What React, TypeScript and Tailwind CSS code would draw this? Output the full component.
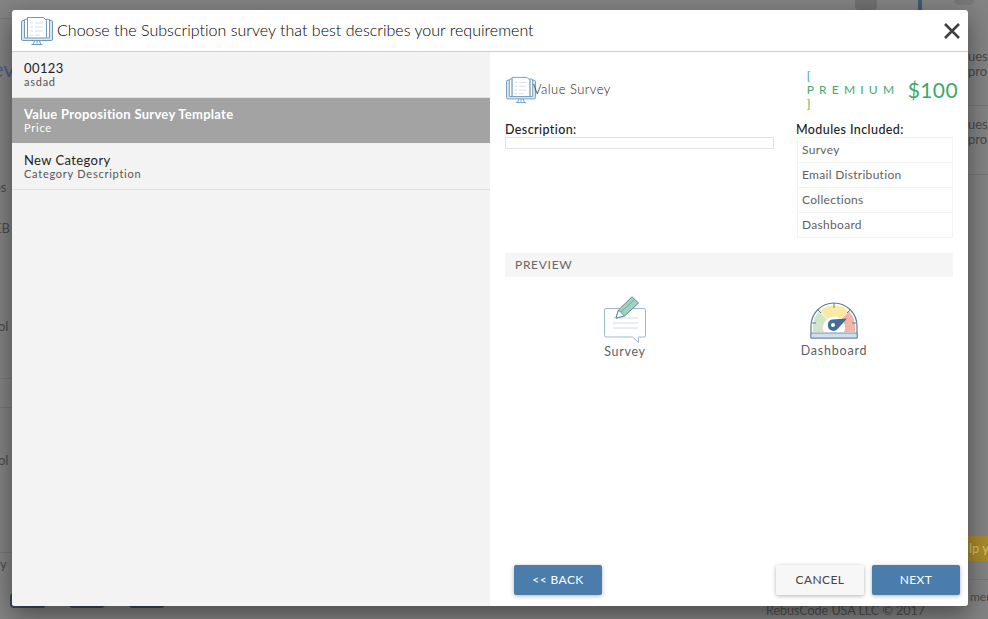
const font = { fontFamily: 'Lato, sans-serif' }

function SurveyBook({ className }: { className?: string }) {
  return (
    <svg viewBox="0 0 32 30" className={className} fill="none" stroke="#6f9abd" strokeWidth="1">
      <rect x="0.5" y="4.5" width="31" height="20" rx="1.5" fill="#dbe8f3" />
      <path d="M3.5 22V3.5l3-.5v19zM28.5 22V3.5l-3-.5v19z" fill="#fff" />
      <path d="M6.5 1.5h16l3 3v17.5h-19z" fill="#fff" />
      <path d="M9 7h3M14 7h8M9 11h3M14 11h8M9 15h3M14 15h8M9 19h3M14 19h5" stroke="#d5e0e9" />
      <path d="M16 24.5v3M13.5 24.5l-1 3.5M18.500 24.5l1 3.5M10.5 28.5h11" />
    </svg>
  )
}

function SurveyIcon() {
  return (
    <svg viewBox="0 0 42 48" className="h-12 w-[42px]" fill="none">
      <path d="M2 12.500h38a1.500 1.500 0 0 1 1.500 1.500v25.500a1.500 1.500 0 0 1-1.500 1.500h-5.500v5.500l-6-5.500H2A1.500 1.500 0 0 1 .5 39.500V14A1.500 1.500 0 0 1 2 12.500z" fill="#fff" stroke="#9db9cc" />
      <path d="M9 22h25M9 27h25M9 32h25" stroke="#d0dde6" />
      <path d="M12 22l2.500-8L28 .8l6.500 6.200L20.500 20z" fill="#9ed2c3" stroke="#5f8f8a" />
      <path d="M12 22l2.500-8 6 6z" fill="#fff" stroke="#5f8f8a" />
      <path d="M17 16L30.500 3.500" stroke="#5f8f8a" strokeWidth="0.6" />
    </svg>
  )
}

function DashboardIcon() {
  return (
    <svg viewBox="0 0 48 38" className="h-[38px] w-12" fill="none">
      <path d="M1 24a23 23 0 0 1 46 0v12H1z" fill="#fff" stroke="#5b7f9c" strokeWidth="1.2" />
      <path d="M3 30v-6a21 21 0 0 1 6-14.500l8 8a10 10 0 0 0-3 12.500z" fill="#d3e5c8" />
      <path d="M9.500 9a21 21 0 0 1 29 0l-8 8a10 10 0 0 0-13 0z" fill="#fbe9a6" />
      <path d="M39 9.500A21 21 0 0 1 45 24v6H34a10 10 0 0 0-3-12.500z" fill="#f3b5a8" />
      <path d="M1 31h46v5H1z" fill="#cfe0ec" stroke="#5b7f9c" strokeWidth="0.8" />
      <path d="M24 1v5M8 8l3 3M40 8l-3 3M2 21h4M42 21h4" stroke="#5b7f9c" />
      <path d="M18 23a5.500 5.500 0 0 1 4-5.500l15-1-9 10a5.500 5.500 0 0 1-10-3.500z" fill="#3f6f96" />
      <circle cx="23" cy="23" r="2" fill="#fff" />
    </svg>
  )
}

function ListRow({ title, sub, active }: { title: string; sub: string; active?: boolean }) {
  return (
    <div className={`h-[46px] border-b pl-3 pt-[9px] ${active ? 'border-[#f3f3f3] bg-[#a3a3a3] text-white' : 'border-[#e2e2e2] text-[#555]'}`}>
      <div className={`text-[13px] leading-[15px] ${active ? 'font-bold tracking-[0.28px]' : 'tracking-[0.4px] text-[#222]'}`}>{title}</div>
      <div className="mt-[-1px] text-[11px] leading-[13px] tracking-[0.75px]">{sub}</div>
    </div>
  )
}

function Behind({ text, className }: { text: string; className: string }) {
  return <div className={`text-[13px] leading-4 text-[#4a4a4a] ${className}`}>{text}</div>
}

export default function App() {
  const modules = ['Survey', 'Email Distribution', 'Collections', 'Dashboard']

  return (
    <div className="relative flex h-[619px] w-[988px] flex-col overflow-hidden bg-[#838383]" style={font}>
      {/* page behind the dialog */}
      <div className="flex h-[10px] shrink-0 items-start pl-[855px]">
        <div className="h-[10px] w-[22px] rounded-b-sm bg-[#707070]" />
        <div className="ml-[41px] h-[10px] w-[4px] bg-[#3d5a78]" />
        <div className="ml-[32px] h-[5px] w-[20px] rounded-b-md bg-[#777]" />
      </div>
      <div className="flex min-h-0 flex-1 justify-between whitespace-nowrap">
        <div className="w-3 overflow-hidden">
          <div className="mt-[8px] border-t border-[#777]" />
          <div className="ml-[-8px] mt-[36px] text-[22px] leading-7 text-[#4d5f80]">ev</div>
          <Behind text="es" className="ml-[-6px] mt-[96px]" />
          <Behind text="EB" className="ml-[-6px] mt-[25px]" />
          <Behind text="ol" className="ml-[-2px] mt-[82px]" />
          <div className="mt-[44px] border-t border-[#777]" />
          <div className="mt-[28px] border-t border-[#777]" />
          <Behind text="ol" className="ml-[-2px] mt-[44px]" />
          <div className="mt-[84px] border-t border-[#777]" />
          <Behind text="y" className="mt-[3px]" />
        </div>
        <div className="w-5 overflow-hidden pt-[39px]">
          <Behind text="uest" className="leading-[15px]" />
          <Behind text="pro" className="leading-[15px]" />
          <div className="mt-[26px] border-t border-[#777]" />
          <Behind text="uest" className="mt-[11px] leading-[15px]" />
          <Behind text="pro" className="leading-[15px]" />
          <div className="mt-[27px] border-t border-[#777]" />
          <div className="mt-[361px] h-[25px] bg-[#a98a2a] pl-[1px] text-[13px] leading-[25px] text-[#d9c26a]">lp y</div>
          <div className="mt-[18px] border-t border-[#777]" />
        </div>
      </div>
      <div className="flex h-[26px] shrink-0 items-start">
        <div className="ml-[10px] h-[15px] w-[36px] rounded-sm border-2 border-[#3e4a5c]" />
        <div className="ml-[23px] h-[15px] w-[36px] rounded-sm border-2 border-[#3e4a5c]" />
        <div className="ml-[24px] h-[15px] w-[36px] rounded-sm border-2 border-[#3e4a5c]" />
        <div className="ml-[601px] mt-[10px] text-[12.500px] leading-4 text-[#4f4f4f]">RebusCode USA LLC © 2017</div>
        <div className="ml-auto mt-[-4px] w-5 overflow-hidden pl-[2px] text-[12px] leading-4 text-[#4a4a4a]">ment</div>
      </div>

      {/* dialog */}
      <div className="absolute left-3 top-[10px] flex h-[596px] w-[956px] flex-col overflow-hidden rounded-[3px] bg-white shadow-[0_8px_24px_rgba(0,0,0,0.45)]">
        <div className="flex h-[42px] shrink-0 items-center border-b border-[#ccc]">
          <SurveyBook className="ml-[9px] h-[30px] w-8" />
          <div className="ml-[4px] mt-[-1px] text-[16px] font-light tracking-[0.015px] text-black">Choose the Subscription survey that best describes your requirement</div>
          <svg viewBox="0 0 16 16" className="ml-auto mr-2 h-4 w-4" stroke="#404040" strokeWidth="2.6" fill="none">
            <path d="M1 1l14 14M15 1L1 15" />
          </svg>
        </div>

        <div className="flex min-h-0 flex-1">
          <div className="w-[478px] shrink-0 bg-[#f3f3f3]">
            <ListRow title="00123" sub="asdad" />
            <ListRow title="Value Proposition Survey Template" sub="Price" active />
            <ListRow title="New Category" sub="Category Description" />
          </div>

          <div className="flex min-w-0 flex-1 flex-col pl-[15px] pr-2">
            <div className="mt-[17px] flex h-[42px] items-center pr-[2px]">
              <SurveyBook className="h-7 w-8 shrink-0" />
              <div className="ml-[-4px] text-[13px] font-light tracking-[0.45px] text-[#222]">Value Survey</div>
              <div className="ml-[196px] w-[90px] text-[12px] leading-[14px] tracking-[5.200px] text-[#45a86e]">
                <div>[</div>
                <div>PREMIUM</div>
                <div>]</div>
              </div>
              <div className="ml-auto text-[21px] tracking-[0.4px] text-[#3fa866]">$100</div>
            </div>

            <div className="mr-[7px] mt-[11px] flex justify-between">
              <div className="w-[269px]">
                <div className="text-[12.500px] font-medium leading-[15px] tracking-[0.4px] text-[#222]">Description:</div>
                <div className="h-3 border border-[#e2e2e2]" />
              </div>
              <div className="w-[157px]">
                <div className="text-[12.500px] font-medium leading-[15px] tracking-[0.4px] text-[#222]">Modules Included:</div>
                <div className="ml-px border-x border-b border-[#f3f3f3]">
                  {modules.map(m => (
                    <div key={m} className="h-[25px] border-t border-[#f3f3f3] pl-[4px] text-[12px] leading-[24px] tracking-[0.3px] text-[#5f5f5f]">{m}</div>
                  ))}
                </div>
              </div>
            </div>

            <div className="mr-[7px] mt-[15px] h-[24px] bg-[#f5f5f5] pl-[10px] text-[12px] leading-[24px] tracking-[0.7px] text-[#666]">PREVIEW</div>

            <div className="mt-[19px] flex items-start">
              <div className="ml-[80px] flex w-[80px] flex-col items-center">
                <SurveyIcon />
                <div className="text-[12.500px] leading-4 tracking-[0.7px] text-[#5f5f5f]">Survey</div>
              </div>
              <div className="ml-[129px] flex w-[80px] flex-col items-center pt-[6px]">
                <DashboardIcon />
                <div className="mt-[3px] text-[12.500px] leading-4 tracking-[0.8px] text-[#5f5f5f]">Dashboard</div>
              </div>
            </div>

            <div className="mb-[11px] mt-auto flex pl-[9px] text-[12px] tracking-[0.4px]">
              <button type="button" className="h-[30px] w-[88px] rounded-[2px] bg-[#4a7dab] text-white shadow-[0_1px_4px_rgba(0,0,0,0.3)]">&lt;&lt; BACK</button>
              <button type="button" className="ml-auto h-[30px] w-[88px] rounded-[2px] bg-[#f7f7f7] text-[#444] shadow-[0_1px_4px_rgba(0,0,0,0.3)]">CANCEL</button>
              <button type="button" className="ml-2 h-[30px] w-[88px] rounded-[2px] bg-[#4a7dab] text-white shadow-[0_1px_4px_rgba(0,0,0,0.3)]">NEXT</button>
            </div>
          </div>
        </div>
      </div>
    </div>
  )
}
